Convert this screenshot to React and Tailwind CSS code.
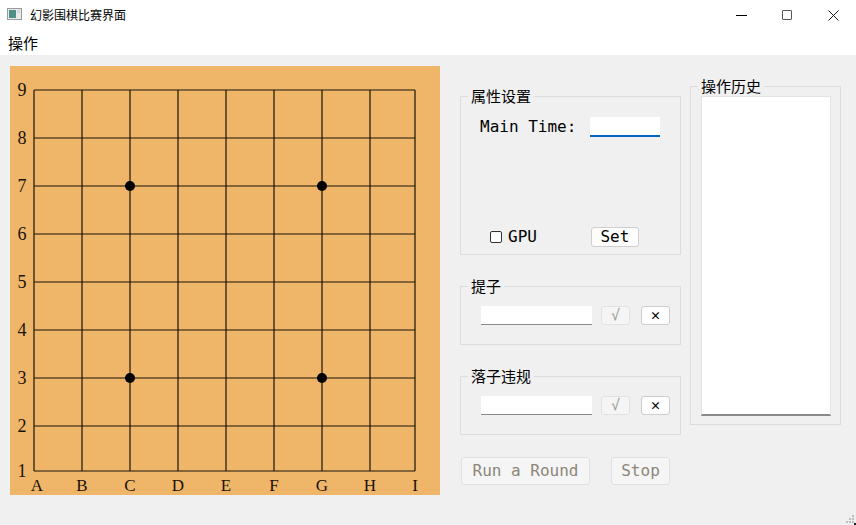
import React from "react";

const cols = ["A", "B", "C", "D", "E", "F", "G", "H", "I"];
// Qt rounding: 48px cells, last one a little short
const pos = (i) => (i === 8 ? 405 : 24 + i * 48);

function Board() {
  return (
    <div className="w-[430px] h-[429px] bg-[#efb66a] shrink-0">
      <svg width="430" height="429" style={{ fontFamily: '"Liberation Serif", serif' }}>
        {cols.map((c, i) => (
          <line key={"v" + i} x1={pos(i)} y1={24} x2={pos(i)} y2={405} stroke="#1a1208" strokeWidth="1.2" />
        ))}
        {cols.map((c, i) => (
          <line key={"h" + i} x1={24} y1={pos(i)} x2={405} y2={pos(i)} stroke="#1a1208" strokeWidth="1.2" />
        ))}
        {[
          [2, 2],
          [6, 2],
          [2, 6],
          [6, 6],
        ].map(([x, y]) => (
          <circle key={x + "-" + y} cx={pos(x)} cy={pos(y)} r="5" fill="#000" />
        ))}
        {cols.map((c, i) => (
          <text key={"n" + i} x={12} y={pos(i) + 6} fontSize="18" textAnchor="middle" fill="#1a1208">
            {9 - i}
          </text>
        ))}
        {cols.map((c, i) => (
          <text key={"l" + i} x={pos(i) + (i === 0 ? 3 : 0)} y={425} fontSize="17" textAnchor="middle" fill="#1a1208">
            {c}
          </text>
        ))}
      </svg>
    </div>
  );
}

function Group({ title, className, children }) {
  return (
    <fieldset className={"border border-[#dcdcdc] " + className}>
      <legend className="ml-[7px] px-[3px] text-[15px] leading-[20px] text-black">{title}</legend>
      {children}
    </fieldset>
  );
}

function SmallRow() {
  return (
    <div className="flex items-center pl-[20px] pt-[10px]">
      <div className="w-[111px] h-[19px] bg-white border-b border-[#8a8a8a]"></div>
      <button
        disabled
        className="ml-[9px] w-[29px] h-[19px] rounded-[3px] border border-[#e2e2e2] bg-[#f5f5f5] text-[#a0a0a0] text-[15px] leading-none"
        style={{ fontFamily: '"DejaVu Sans Mono", monospace' }}
      >
        √
      </button>
      <button className="ml-[11px] w-[29px] h-[19px] rounded-[3px] border border-[#cccccc] bg-[#fdfdfd] text-black text-[11px] font-bold leading-none">
        ×
      </button>
    </div>
  );
}

export default function App() {
  const mono = { fontFamily: '"DejaVu Sans Mono", "Liberation Mono", monospace' };
  return (
    <div
      className="w-[856px] h-[525px] bg-[#f0f0f0] flex flex-col overflow-hidden relative"
      style={{ fontFamily: '"Noto Sans CJK SC", "Noto Sans", sans-serif' }}
    >
      {/* title bar */}
      <div className="h-[30px] bg-white flex items-center shrink-0">
        <svg width="16" height="14" className="ml-[7px]" viewBox="0 0 16 14">
          <rect x="0.5" y="0.5" width="14" height="11" fill="#eaeaea" stroke="#9a9a9a" />
          <rect x="2" y="2" width="7" height="8" fill="#4d8f87" />
          <rect x="10" y="2" width="3" height="3" fill="#cfd8dc" />
        </svg>
        <span className="ml-[7px] text-[12px] text-black">幻影围棋比赛界面</span>
        <div className="ml-auto flex items-center h-full">
          <div className="w-[46px] flex justify-center">
            <div className="w-[11px] h-[1px] bg-black"></div>
          </div>
          <div className="w-[46px] flex justify-center">
            <div className="w-[10px] h-[10px] border border-[#555] rounded-[1px]"></div>
          </div>
          <div className="w-[46px] flex justify-center">
            <svg width="11" height="11" viewBox="0 0 11 11">
              <path d="M0.5 0.5 L10.5 10.5 M10.5 0.5 L0.5 10.5" stroke="#111" strokeWidth="1" />
            </svg>
          </div>
        </div>
      </div>

      {/* menu bar */}
      <div className="h-[25px] bg-white flex items-center shrink-0">
        <span className="ml-[8px] text-[15px] leading-none text-black">操作</span>
      </div>

      {/* content */}
      <div className="flex items-start pl-[10px] pt-[11px]">
        <Board />

        <div className="ml-[20px] w-[221px] flex flex-col">
          <Group title="属性设置" className="mt-[20px] h-[169px]">
            <div className="flex items-center pl-[19px] pt-[9px]">
              <span className="text-[16px] text-black" style={mono}>
                Main Time:
              </span>
              <div className="ml-[14px] w-[70px] h-[20px] bg-white border-b-2 border-[#0067c0]"></div>
            </div>
            <div className="flex items-center mt-[88px] pl-[29px]">
              <div className="w-[12px] h-[12px] border border-[#333] rounded-[2px] bg-white"></div>
              <span className="ml-[6px] text-[16px] text-black leading-none" style={mono}>
                GPU
              </span>
              <button
                className="ml-[54px] w-[48px] h-[20px] rounded-[3px] border border-[#cfcfcf] bg-[#fdfdfd] text-[16px] leading-none text-black"
                style={mono}
              >
                Set
              </button>
            </div>
          </Group>

          <Group title="提子" className="mt-[21px] h-[69px]">
            <SmallRow />
          </Group>

          <Group title="落子违规" className="mt-[21px] h-[69px]">
            <SmallRow />
          </Group>

          <div className="flex mt-[22px] pl-[1px]">
            <button
              disabled
              className="w-[129px] h-[28px] rounded-[3px] border border-[#e0e0e0] bg-[#f5f5f5] text-[16px] leading-none text-[#8d8678]"
              style={mono}
            >
              Run a Round
            </button>
            <button
              disabled
              className="ml-[21px] w-[59px] h-[28px] rounded-[3px] border border-[#e0e0e0] bg-[#f5f5f5] text-[16px] leading-none text-[#8d8678]"
              style={mono}
            >
              Stop
            </button>
          </div>
        </div>

        <div className="ml-[9px] w-[151px]">
          <Group title="操作历史" className="mt-[10px] h-[349px]">
            <div className="ml-[10px] mt-[0px] w-[130px] h-[320px] bg-white border border-[#e3e3e3] border-b-2 border-b-[#8a8a8a]"></div>
          </Group>
        </div>
      </div>

      {/* size grip */}
      <svg width="12" height="12" className="absolute right-0 bottom-0" viewBox="0 0 12 12">
        <rect x="8" y="2" width="2" height="2" fill="#bdbdbd" />
        <rect x="5" y="5" width="2" height="2" fill="#bdbdbd" />
        <rect x="8" y="5" width="2" height="2" fill="#bdbdbd" />
        <rect x="2" y="8" width="2" height="2" fill="#bdbdbd" />
        <rect x="5" y="8" width="2" height="2" fill="#bdbdbd" />
        <rect x="8" y="8" width="2" height="2" fill="#bdbdbd" />
        <rect x="10" y="10" width="2" height="2" fill="#222" />
      </svg>
    </div>
  );
}
